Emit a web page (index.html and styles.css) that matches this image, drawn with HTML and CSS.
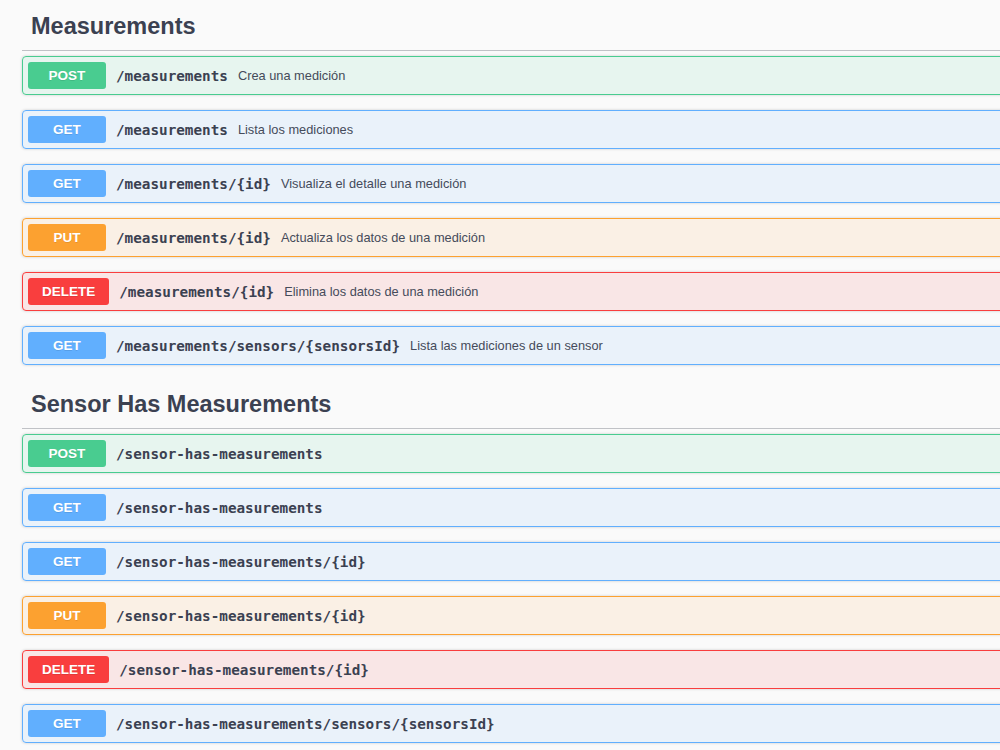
FILE: index.html
```html
<!DOCTYPE html>
<html lang="es">
<head>
    <meta charset="UTF-8">
    <meta name="viewport" content="width=device-width, initial-scale=1.0">
    <title>API Measurements</title>
    <link rel="stylesheet" href="styles.css">
</head>
<body>
    <div class="wrapper">
        <section class="tag-section">
            <h3 class="tag-title">Measurements</h3>
            <div class="opblock post">
                <span class="method">POST</span>
                <span class="path">/measurements</span>
                <span class="desc">Crea una medición</span>
            </div>
            <div class="opblock get">
                <span class="method">GET</span>
                <span class="path">/measurements</span>
                <span class="desc">Lista los mediciones</span>
            </div>
            <div class="opblock get">
                <span class="method">GET</span>
                <span class="path">/measurements/{id}</span>
                <span class="desc">Visualiza el detalle una medición</span>
            </div>
            <div class="opblock put">
                <span class="method">PUT</span>
                <span class="path">/measurements/{id}</span>
                <span class="desc">Actualiza los datos de una medición</span>
            </div>
            <div class="opblock delete">
                <span class="method">DELETE</span>
                <span class="path">/measurements/{id}</span>
                <span class="desc">Elimina los datos de una medición</span>
            </div>
            <div class="opblock get">
                <span class="method">GET</span>
                <span class="path">/measurements/sensors/{sensorsId}</span>
                <span class="desc">Lista las mediciones de un sensor</span>
            </div>
        </section>

        <section class="tag-section">
            <h3 class="tag-title">Sensor Has Measurements</h3>
            <div class="opblock post">
                <span class="method">POST</span>
                <span class="path">/sensor-has-measurements</span>
            </div>
            <div class="opblock get">
                <span class="method">GET</span>
                <span class="path">/sensor-has-measurements</span>
            </div>
            <div class="opblock get">
                <span class="method">GET</span>
                <span class="path">/sensor-has-measurements/{id}</span>
            </div>
            <div class="opblock put">
                <span class="method">PUT</span>
                <span class="path">/sensor-has-measurements/{id}</span>
            </div>
            <div class="opblock delete">
                <span class="method">DELETE</span>
                <span class="path">/sensor-has-measurements/{id}</span>
            </div>
            <div class="opblock get">
                <span class="method">GET</span>
                <span class="path">/sensor-has-measurements/sensors/{sensorsId}</span>
            </div>
        </section>
    </div>
</body>
</html>
```

FILE: styles.css
```css
html, body {
    overflow: hidden;
}
body {
    margin: 0;
    padding: 2px 0 0 22px;
    background-color: #fafafa;
    font-family: "Liberation Sans", Arial, sans-serif;
    color: #3b4151;
}
.wrapper {
    width: 1200px;
}
.tag-title {
    margin: 0 0 5px;
    padding: 11px 20px 10px 9px;
    font-size: 23.5px;
    line-height: 27px;
    font-weight: bold;
    border-bottom: 1px solid rgba(59, 65, 81, 0.3);
}
.opblock {
    display: flex;
    align-items: center;
    height: 37px;
    padding: 0 5px;
    margin-bottom: 15px;
    border: 1px solid #61affe;
    border-radius: 4px;
    box-shadow: 0 0 3px rgba(0, 0, 0, 0.19);
}
.method {
    min-width: 78px;
    height: 27px;
    line-height: 27px;
    padding: 0 14px;
    box-sizing: border-box;
    border-radius: 3px;
    font-size: 13.5px;
    font-weight: bold;
    text-align: center;
    color: #fff;
    text-shadow: 0 1px 0 rgba(0, 0, 0, 0.1);
}
.path {
    padding: 0 10px;
    font-family: "DejaVu Sans Mono", monospace;
    font-size: 14.3px;
    font-weight: bold;
    color: #3b4151;
}
.desc {
    font-size: 12.8px;
    color: #454b5a;
}
.post {
    background-color: rgba(73, 204, 144, 0.1);
    border-color: #49cc90;
}
.post .method {
    background-color: #49cc90;
}
.get {
    background-color: rgba(97, 175, 254, 0.1);
    border-color: #61affe;
}
.get .method {
    background-color: #61affe;
}
.put {
    background-color: rgba(252, 161, 48, 0.1);
    border-color: #fca130;
}
.put .method {
    background-color: #fca130;
}
.delete {
    background-color: rgba(249, 62, 62, 0.1);
    border-color: #f93e3e;
}
.delete .method {
    background-color: #f93e3e;
}
```
